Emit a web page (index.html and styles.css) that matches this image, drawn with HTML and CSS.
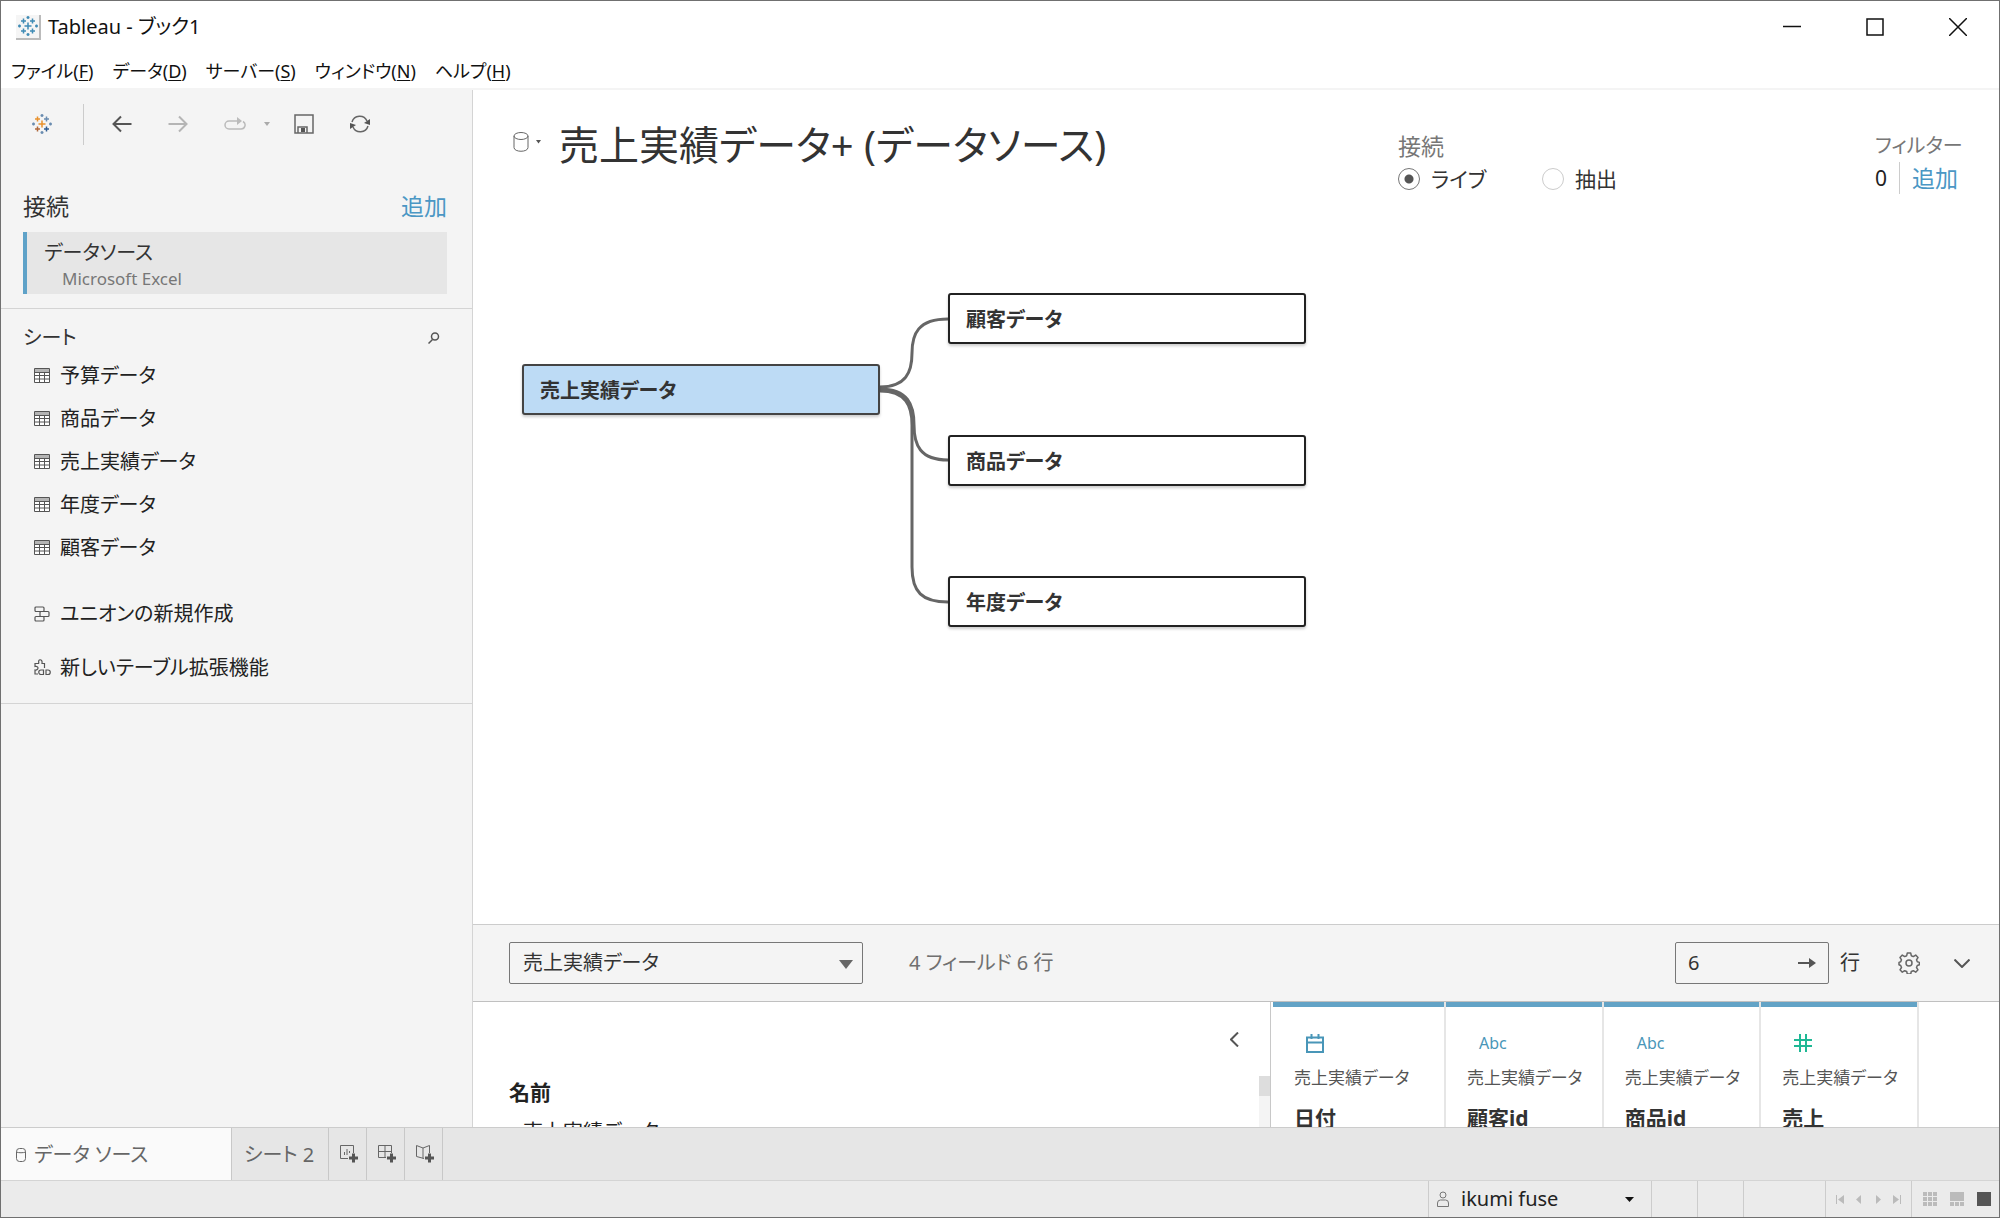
FILE: index.html
```html
<!DOCTYPE html>
<html lang="ja">
<head>
<meta charset="utf-8">
<title>Tableau - ブック1</title>
<link rel="stylesheet" href="styles.css">
</head>
<body>
<svg class="defs" width="0" height="0" aria-hidden="true">
  <symbol id="sheet" viewBox="0 0 16 15"><path d="M.5.5h15v14H.5z" fill="#fff" stroke="#555"/><path d="M1 1h14v3H1z" fill="#b5b5b5"/><path d="M.5 4.500h15M.5 7.500h15M.5 11h15M5.500 4v11M10.500 4v11" stroke="#555" fill="none"/></symbol>
  <symbol id="spark" viewBox="0 0 20 20"><path class="s-mid" d="M10 6.500v7M6.500 10h7"/><path class="s-tl" d="M5.500 2.500v5M3 5h5"/><path class="s-tr" d="M14.500 2.500v5M12 5h5"/><path class="s-bl" d="M5.500 12.500v5M3 15h5"/><path class="s-br" d="M14.500 12.500v5M12 15h5"/><path class="s-far" d="M10 0v3M8.500 1.500h3M10 17v3M8.500 18.500h3M1.500 8.500v3M0 10h3M18.500 8.500v3M17 10h3"/></symbol>
</svg>
<div class="window">
  <header class="titlebar">
    <span class="app-icon"><svg class="spark-blue" width="20" height="20"><use href="#spark"/></svg></span>
    <span class="app-title">Tableau - ブック1</span>
    <div class="window-buttons">
      <button aria-label="最小化"><svg width="18" height="18"><path d="M0 8.500h18" stroke="#111" stroke-width="1.500" fill="none"/></svg></button>
      <button aria-label="最大化"><svg width="18" height="18"><path d="M1 1h16v16H1z" stroke="#111" stroke-width="1.500" fill="none"/></svg></button>
      <button aria-label="閉じる"><svg width="18" height="18"><path d="M0 0l18 18M18 0L0 18" stroke="#111" stroke-width="1.500" fill="none"/></svg></button>
    </div>
  </header>
  <nav class="menubar">
    <button>ファイル(<u>F</u>)</button><button>データ(<u>D</u>)</button><button>サーバー(<u>S</u>)</button><button>ウィンドウ(<u>N</u>)</button><button>ヘルプ(<u>H</u>)</button>
  </nav>
  <div class="workspace">
    <aside class="sidebar">
      <div class="toolbar">
        <button class="home" aria-label="スタート"><svg class="spark-color" width="20" height="20"><use href="#spark"/></svg></button>
        <span class="tool-line"></span>
        <button aria-label="元に戻す"><svg width="20" height="18" fill="none" stroke="#555" stroke-width="2"><path d="M19.500 9H1.500M9 1.500L1.500 9L9 16.500"/></svg></button>
        <button aria-label="やり直し"><svg width="20" height="18" fill="none" stroke="#b5b5b5" stroke-width="2"><path d="M.5 9h18M11 1.500L18.500 9L11 16.500"/></svg></button>
        <button aria-label="再実行"><svg width="22" height="14" fill="none" stroke="#bbb" stroke-width="1.500"><path d="M15 4H5a4 4 0 0 0 0 8h12a4 4 0 0 0 2-7.500"/><path d="M13 0l5 4l-5 4z" fill="#bbb" stroke="none"/></svg></button>
        <button class="tiny" aria-label="再実行オプション"><svg width="6" height="4"><path d="M0 0h6L3 4z" fill="#aaa"/></svg></button>
        <button aria-label="保存"><svg width="20" height="20" fill="none" stroke="#666" stroke-width="1.500"><path d="M1 1h18v18H1zM4 19v-6h9v6"/><path d="M7 14h4v4H7z" fill="#555" stroke="none"/></svg></button>
        <button aria-label="更新"><svg width="20" height="18" fill="none" stroke="#666" stroke-width="1.500"><path d="M2 7A8 8 0 0 1 17 6M18 11A8 8 0 0 1 3 12"/><path d="M20 4v6l-6-2zM0 14V8l6 2z" fill="#555" stroke="none"/></svg></button>
      </div>
      <section class="connections">
        <div class="side-head"><h2>接続</h2><a href="#">追加</a></div>
        <button class="connection"><span class="conn-name">データソース</span><span class="conn-type">Microsoft Excel</span></button>
      </section>
      <section class="sheets">
        <div class="side-head"><h3>シート</h3><button class="search" aria-label="検索"><svg width="12" height="12" fill="none" stroke="#555" stroke-width="1.500"><circle cx="7" cy="4.500" r="3.500"/><path d="M4.500 7.500L.5 11.500"/></svg></button></div>
        <ul class="sheet-list">
          <li><svg width="16" height="15"><use href="#sheet"/></svg>予算データ</li>
          <li><svg width="16" height="15"><use href="#sheet"/></svg>商品データ</li>
          <li><svg width="16" height="15"><use href="#sheet"/></svg>売上実績データ</li>
          <li><svg width="16" height="15"><use href="#sheet"/></svg>年度データ</li>
          <li><svg width="16" height="15"><use href="#sheet"/></svg>顧客データ</li>
        </ul>
        <div class="side-actions">
          <button><svg width="18" height="16" fill="none" stroke="#555" stroke-width="1.200"><rect x="1" y="1" width="9" height="4.500" rx="1"/><rect x="6" y="5.500" width="9" height="5" rx="1"/><rect x="1" y="10.500" width="9" height="4.500" rx="1"/></svg>ユニオンの新規作成</button>
          <button><svg width="18" height="17" fill="none" stroke="#555" stroke-width="1.200"><path d="M5 4.500H1v3c4-1 4 4 0 3.500V15h3M5 4.500c-2-5 4-5 3 0h2.500V9"/><path d="M9.500 15.500H7a2 2 0 1 1 0-4.500h2.500zM12 11v4.500h2c3 0 3-4.500 0-4.500z"/></svg>新しいテーブル拡張機能</button>
        </div>
      </section>
    </aside>
    <main class="main">
      <div class="source-head">
        <button class="source-menu" aria-label="データソース"><svg width="30" height="20" fill="none" stroke="#666"><ellipse cx="8" cy="4" rx="7" ry="3.500"/><path d="M1 4v11.500c0 5 14 5 14 0V4"/><path d="M23 8h5l-2.500 3.500z" fill="#555" stroke="none"/></svg></button>
        <h1>売上実績データ+ (データソース)</h1>
        <fieldset class="live">
          <legend>接続</legend>
          <label><input type="radio" name="mode" checked>ライブ</label>
          <label><input type="radio" name="mode">抽出</label>
        </fieldset>
        <div class="filters">
          <span class="filters-title">フィルター</span>
          <span class="filters-row"><span class="count">0</span><a href="#">追加</a></span>
        </div>
      </div>
      <div class="canvas">
        <svg class="links" width="840" height="460" fill="none" stroke="#666" stroke-width="3"><path d="M407 187c26 0 32-15 32-34s6-34 36-34"/><path d="M407 189c28 0 34 16 34 36s6 35 34 35"/><path d="M407 191c26 0 32 15 32 34v142c0 25 10 35 36 35"/></svg>
        <div class="node root">売上実績データ</div>
        <div class="node n1">顧客データ</div>
        <div class="node n2">商品データ</div>
        <div class="node n3">年度データ</div>
      </div>
      <div class="grid-bar">
        <span class="select-wrap"><select aria-label="テーブル"><option>売上実績データ</option></select><svg class="select-arrow" width="14" height="9"><path d="M0 0h14L7 9z" fill="#666"/></svg></span>
        <span class="summary">4 フィールド 6 行</span>
        <span class="row-field"><input id="rows" type="text" value="6"><button aria-label="適用"><svg width="18" height="12"><path d="M0 6h12" stroke="#555" stroke-width="2"/><path d="M11 1l7 5l-7 5z" fill="#555"/></svg></button></span>
        <label class="row-label" for="rows">行</label>
        <button class="gear" aria-label="設定"><svg width="22" height="22" viewBox="0 0 22 22" fill="none" stroke="#666" stroke-width="1.500" stroke-linejoin="round"><path d="M9.300 1h3.400l.6 2.700 2 .9 2.400-1.500 2.300 2.400-1.500 2.300.8 2 2.100.6v2.400l-2.100.7-.8 2 1.500 2.300-2.300 2.400-2.400-1.500-2 .8-.6 2.500H9.300l-.6-2.500-2-.8-2.400 1.500L2 17.800l1.500-2.300-.8-2L1 12.800v-2.400l1.700-.6.8-2L2 5.500l2.300-2.400 2.400 1.500 2-.9z"/><circle cx="11" cy="11" r="3"/></svg></button>
        <button class="collapse" aria-label="折りたたむ"><svg width="16" height="9" fill="none" stroke="#555" stroke-width="2"><path d="M.5.5L8 8L15.500.5"/></svg></button>
      </div>
      <div class="grid-area">
        <section class="meta">
          <div class="meta-body">
            <button class="meta-fold" aria-label="閉じる"><svg width="9" height="15" fill="none" stroke="#555" stroke-width="2"><path d="M8 .5L1 7.500l7 7"/></svg></button>
            <h4>名前</h4>
            <p>売上実績データ</p>
          </div>
          <div class="scroll"><span></span></div>
        </section>
        <table class="fields">
          <thead><tr>
            <th class="wide"><span class="kind"><svg width="18" height="19" fill="none" stroke="#4996b8" stroke-width="2"><path d="M1 3.500h16V18H1zM1 8.500h16M5.500 0v5M12.500 0v5"/></svg></span><span class="table">売上実績データ</span><span class="name">日付</span></th>
            <th><span class="kind">Abc</span><span class="table">売上実績データ</span><span class="name">顧客id</span></th>
            <th><span class="kind">Abc</span><span class="table">売上実績データ</span><span class="name">商品id</span></th>
            <th><span class="kind"><svg width="18" height="18" fill="none" stroke="#1fb895" stroke-width="2"><path d="M6 0v18M12 0v18M0 6h18M0 12h18"/></svg></span><span class="table">売上実績データ</span><span class="name">売上</span></th>
          </tr></thead>
        </table>
      </div>
    </main>
  </div>
  <nav class="tabs">
    <button class="tab active"><svg width="10" height="14" fill="none" stroke="#666"><rect x=".5" y=".5" width="9" height="13" rx="3"/><path d="M.5 4c2 1 7 1 9 0"/></svg>データ ソース</button>
    <button class="tab">シート 2</button>
    <button class="tab-new" aria-label="新しいワークシート"><svg width="18" height="18" fill="none" stroke="#666"><path d="M8 13.500H.5V.5h13V8M4.500 10V7M7 10V4M9.500 8V6"/><path d="M13.500 8.500v9M9 13h9" stroke="#555" stroke-width="3"/></svg></button>
    <button class="tab-new" aria-label="新しいダッシュボード"><svg width="18" height="18" fill="none" stroke="#666"><path d="M8 12.500H.5V.5h13V8M.5 6.500h13M7 .5v12"/><path d="M13.500 8.500v9M9 13h9" stroke="#555" stroke-width="3"/></svg></button>
    <button class="tab-new" aria-label="新しいストーリー"><svg width="18" height="18" fill="none" stroke="#666"><path d="M8 13.500L.5 11.500V.5L7 3l6.500-2.500V8M7 3v10.500"/><path d="M13.500 8.500v9M9 13h9" stroke="#555" stroke-width="3"/></svg></button>
  </nav>
  <footer class="status">
    <button class="user"><svg width="12" height="16" fill="none" stroke="#777"><circle cx="6" cy="4" r="3"/><path d="M.5 15.500V12q0-3 3-3h5q3 0 3 3v3.500z"/></svg><span>ikumi fuse</span><svg width="9" height="5"><path d="M0 0h9L4.500 5z" fill="#111"/></svg></button>
    <span class="cell small"></span><span class="cell small"></span><span class="cell large"></span>
    <span class="cell pager">
      <button aria-label="先頭"><svg width="8" height="9" fill="#bbb"><path d="M0 0h1v9H0zM8 0v9L2 4.500z"/></svg></button>
      <button aria-label="前"><svg width="8" height="9" fill="#bbb"><path d="M6 0v9L1 4.500z"/></svg></button>
      <button aria-label="次"><svg width="8" height="9" fill="#bbb"><path d="M2 0v9l5-4.500z"/></svg></button>
      <button aria-label="末尾"><svg width="8" height="9" fill="#bbb"><path d="M7 0h1v9H7zM0 0v9l6-4.500z"/></svg></button>
    </span>
    <span class="cell views">
      <button aria-label="シートソーター"><svg width="14" height="14" fill="#bbb"><path d="M0 0h4v4H0zM5 0h4v4H5zM10 0h4v4h-4zM0 5h4v4H0zM5 5h4v4H5zM10 5h4v4h-4zM0 10h4v4H0zM5 10h4v4H5zM10 10h4v4h-4z"/></svg></button>
      <button aria-label="フィルムストリップ"><svg width="14" height="14" fill="#bbb"><path d="M0 0h14v9H0zM0 10h4v4H0zM5 10h4v4H5zM10 10h4v4h-4z"/></svg></button>
      <button aria-label="シートタブ"><svg width="14" height="14"><path d="M0 0h14v14H0z" fill="#555"/></svg></button>
    </span>
  </footer>
</div>
</body>
</html>
```
FILE: styles.css
```css
* { box-sizing: border-box; }
body {
  margin: 0;
  font: 20px/30px "Noto Sans", "Noto Sans CJK JP", sans-serif;
  font-feature-settings: "palt";
  color: #222;
  background: #fff;
}
button, input, select { font: inherit; font-feature-settings: inherit; color: inherit; }
button { border: 0; padding: 0; background: none; display: inline-flex; align-items: center; }
h1, h2, h3, h4, p, ul, fieldset { margin: 0; padding: 0; border: 0; font-size: inherit; font-weight: 400; }
ul { list-style: none; }
a { color: #4b97c4; text-decoration: none; }
svg { flex: none; display: block; }
.defs { position: absolute; }

.window { height: 100vh; display: flex; flex-direction: column; border: 1px solid #707070; }

.titlebar { display: flex; align-items: center; height: 52px; padding: 0 32px 0 15px; gap: 7px; color: #111; }
.app-icon { display: grid; place-items: center; width: 25px; height: 25px; background: #f5f5f5; border: solid #bbb; border-width: 0 2px 2px 0; }
.app-title { flex: 1; }
.window-buttons { display: flex; gap: 65px; }

.spark-blue { stroke: #3f8bb5; stroke-width: 1.500px; fill: none; }
.spark-color { stroke: #6a8cb0; stroke-width: 1.500px; fill: none; --orange: #e8912d; --brown: #b0683c; --navy: #2f5c92; }
.s-mid, .s-tl { stroke: var(--orange, #3f8bb5); }
.s-bl { stroke: var(--brown, #3f8bb5); }
.s-br { stroke: var(--navy, #3f8bb5); }

.menubar { display: flex; gap: 19px; height: 37px; padding-left: 10px; align-items: center; border-bottom: 2px solid #f4f4f4; font-size: 18px; color: #111; }
u { text-underline-offset: 2px; }

.workspace { flex: 1; min-height: 0; display: grid; grid-template-columns: 472px 1fr; }
.sidebar { background: #f4f4f4; border-right: 1px solid #d4d4d4; color: #333; }
.toolbar { display: flex; align-items: center; height: 68px; padding-left: 31px; }
.toolbar button { width: 22px; margin-right: 34px; }
.toolbar .home { margin-right: 29px; }
.tool-line { width: 1px; height: 41px; background: #ccc; margin-right: 28px; }
.toolbar .tiny { width: 6px; margin: 0 24px 0 -16px; }
.side-head { display: flex; justify-content: space-between; align-items: center; }
.side-head h2, .side-head a { font-size: 23px; }
.connections { padding: 32px 25px 14px 22px; border-bottom: 1px solid #d4d4d4; }
.connections .side-head { height: 42px; padding-bottom: 10px; }
.connection { display: flex; flex-direction: column; align-items: flex-start; width: 100%; height: 62px; border-left: 4px solid #5fa2c8; background: #e6e6e6; padding: 7px 17px; }
.conn-name { line-height: 28px; }
.conn-type { font-size: 17px; line-height: 24px; padding-left: 18px; color: #777; }
.sheets { border-bottom: 1px solid #d4d4d4; padding: 14px 32px 14px 22px; }
.sheet-list { padding-top: 1px; color: #222; }
.sheet-list li, .side-actions button { display: flex; align-items: center; gap: 10px; height: 43px; padding-left: 11px; }
.side-actions { padding-top: 23px; display: flex; flex-direction: column; gap: 11px; color: #222; }
.side-actions button { gap: 8px; }

.main { display: flex; flex-direction: column; min-width: 0; min-height: 0; }
.source-head { display: flex; height: 110px; padding: 26px 38px 0 40px; }
.source-menu { height: 52px; width: 46px; flex: none; }
h1 { flex: 1; font-size: 40px; line-height: 58px; color: #333; white-space: nowrap; }
.live { width: 477px; display: flex; flex-wrap: wrap; align-content: flex-start; }
.live legend { float: left; width: 100%; padding: 14px 0 0; font-size: 23px; line-height: 32px; color: #777; }
.live label { display: flex; align-items: center; gap: 11px; width: 144px; font-size: 21px; line-height: 34px; color: #333; }
.live input { appearance: none; width: 22px; height: 22px; margin: 0; border: 1px solid #ccc; border-radius: 50%; background: #fff; }
.live input:checked { border-color: #777; background: radial-gradient(circle, #555 0 4px, #fff 5px); }
.filters { display: flex; flex-direction: column; width: 86px; line-height: 32px; padding-top: 14px; white-space: nowrap; }
.filters-title { color: #777; }
.filters-row { display: flex; font-size: 23px; }
.count { padding-right: 12px; margin-right: 12px; border-right: 1px solid #ccc; font-size: 21px; }

.canvas { position: relative; flex: 1; min-height: 0; }
.links { position: absolute; left: 0; top: 0; }
.node { position: absolute; width: 358px; height: 51px; padding: 10px 16px; line-height: 30px; font-weight: 700; color: #333; background: #fff; border: 2px solid #222; border-radius: 3px; box-shadow: 0 2px 3px #0003; }
.root { left: 49px; top: 164px; background: #bddbf5; border-color: #444; }
.n1 { left: 475px; top: 93px; }
.n2 { left: 475px; top: 235px; }
.n3 { left: 475px; top: 376px; }

.grid-bar { display: flex; align-items: center; height: 78px; padding: 0 29px 0 36px; background: #f4f4f4; border-top: 1px solid #ccc; border-bottom: 1px solid #c0c0c0; color: #333; }
.select-wrap { position: relative; width: 354px; }
select, .row-field { height: 42px; border: 1px solid #777; border-radius: 2px; background: #f4f4f4; }
select { appearance: none; width: 100%; padding: 0 13px; display: block; }
.select-arrow { position: absolute; right: 10px; top: 18px; pointer-events: none; }
.summary { flex: 1; padding-left: 46px; color: #707070; }
.row-field { display: flex; width: 154px; padding: 0 12px; }
.row-field input { flex: 1; min-width: 0; border: 0; padding: 0; background: none; }
.row-label { padding: 0 38px 0 11px; }
.gear { margin-right: 34px; }

.grid-area { display: flex; height: 125px; overflow: hidden; }
.meta { display: flex; width: 798px; border-right: 1px solid #c8c8c8; }
.meta-body { flex: 1; padding: 29px 20px 0 36px; }
.meta-fold { display: flex; margin-left: auto; height: 16px; }
h4 { font-size: 21px; font-weight: 700; padding-top: 30px; }
.meta p { padding: 10px 0 0 14px; }
.scroll { width: 11px; margin-top: 74px; background: #f4f4f4; }
.scroll span { display: block; height: 20px; background: #ddd; }
.fields { border-collapse: separate; border-spacing: 0; align-self: flex-start; margin-left: 2px; table-layout: fixed; width: 646px; }
.fields th { padding: 0 0 0 21px; vertical-align: top; text-align: left; font-weight: 400; border-right: 2px solid #e6e6e6; background: linear-gradient(#63a3c6 0 5px, #fff 5px); background-clip: padding-box; }
.fields .wide { width: 173px; }
.kind { display: flex; align-items: center; height: 40px; margin-top: 21px; padding-left: 12px; font-size: 16px; color: #4996b8; }
.table { display: block; font-size: 17px; line-height: 30px; color: #555; }
.name { display: block; font-size: 21px; font-weight: 700; line-height: 30px; padding-top: 10px; color: #333; }

.tabs { display: flex; height: 54px; background: #e6e6e6; border-top: 1px solid #ccc; border-bottom: 1px solid #d4d4d4; color: #666; }
.tabs button { border-right: 1px solid #c8c8c8; }
.tab { padding: 2px 12px 0; width: 97px; white-space: nowrap; }
.tab.active { width: 231px; gap: 8px; padding-left: 15px; background: #fafafa; }
.tabs .tab-new { width: 38px; padding-left: 11px; }

.status { display: flex; justify-content: flex-end; height: 36px; background: #ebebeb; color: #222; }
.user, .cell { border-left: 1px solid #ccc; }
.user { width: 223px; padding: 0 17px 0 8px; gap: 12px; }
.user span { flex: 1; text-align: left; }
.cell { display: flex; align-items: center; }
.small { width: 46px; }
.large { width: 82px; }
.pager { width: 86px; gap: 11px; padding-left: 10px; }
.views { width: 88px; gap: 13px; padding-left: 11px; }
```
